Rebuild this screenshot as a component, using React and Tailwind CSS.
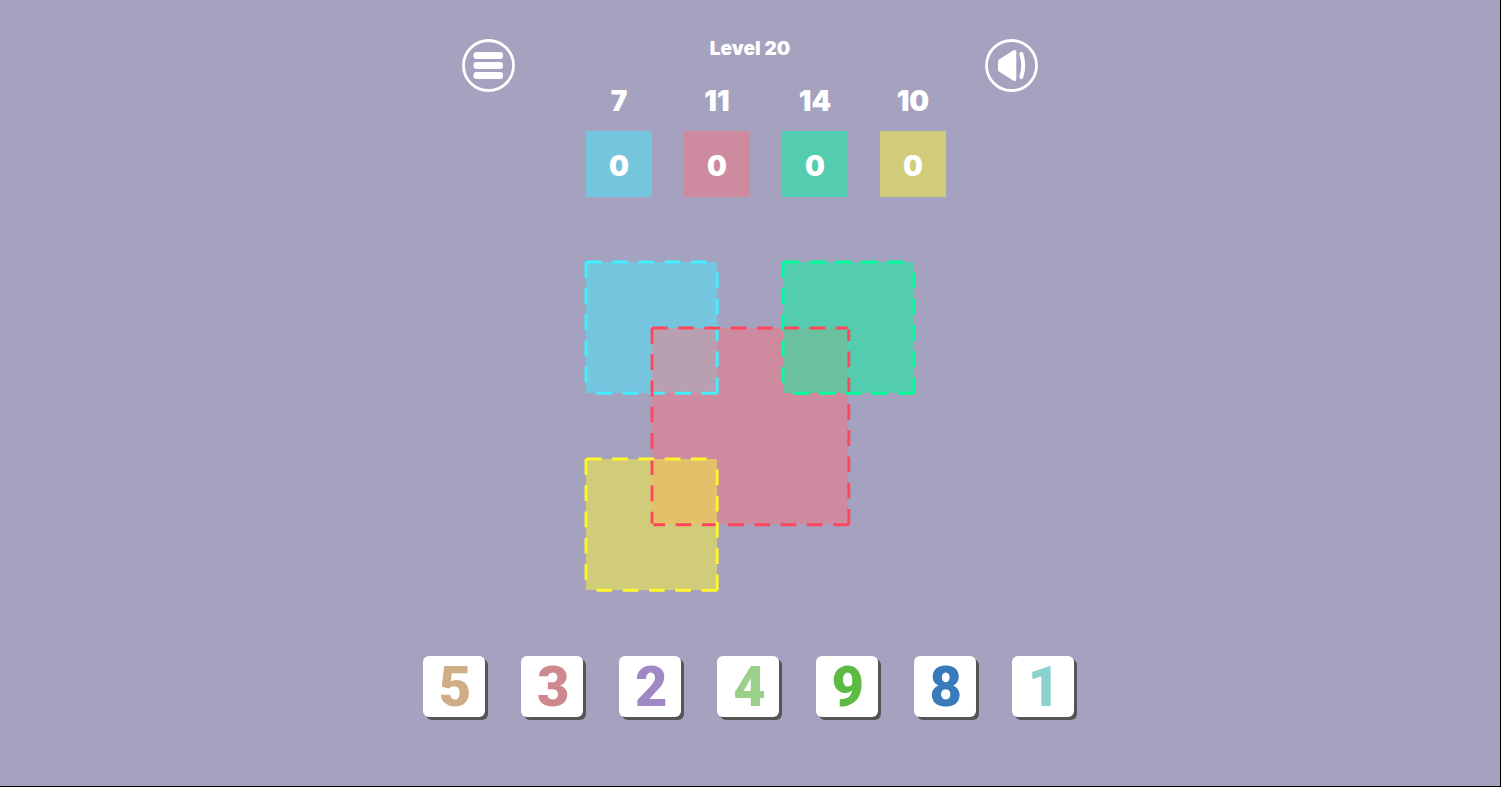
import React from "react";

const targets = [
  { goal: 7, value: 0, name: "Blue", fill: "bg-[#76c5de]" },
  { goal: 11, value: 0, name: "Red", fill: "bg-[#ce8b9f]" },
  { goal: 14, value: 0, name: "Green", fill: "bg-[#54ccb0]" },
  { goal: 10, value: 0, name: "Yellow", fill: "bg-[#d0cc7a]" },
];

const areas = [
  { id: "blue", size: 20, place: "col-start-1 col-span-2 row-start-1 row-span-2", fill: "bg-[#76c5de]" },
  { id: "green", size: 20, place: "col-start-4 col-span-2 row-start-1 row-span-2", fill: "bg-[#54ccb0]" },
  { id: "yellow", size: 20, place: "col-start-1 col-span-2 row-start-4 row-span-2", fill: "bg-[#d0cc7a]" },
  { id: "red", size: 30, place: "col-start-2 col-span-3 row-start-2 row-span-3", fill: "bg-[#ce8b9f]" },
];

const overlaps = [
  "col-start-2 row-start-2 bg-[#b9a0b1]",
  "col-start-4 row-start-2 bg-[#6ac09f]",
  "col-start-2 row-start-4 bg-[#e5c06b]",
];

const outlines = [
  { ...areas[0], stroke: "stroke-[#43efff]" },
  { ...areas[3], stroke: "stroke-[#ff465c]" },
  { ...areas[1], stroke: "stroke-[#00ff9d]" },
  { ...areas[2], stroke: "stroke-[#fff72b]" },
];

const tiles = [
  { n: 5, color: "text-[#cfae87]" },
  { n: 3, color: "text-[#d0888f]" },
  { n: 2, color: "text-[#9f88c3]" },
  { n: 4, color: "text-[#9ad08a]" },
  { n: 9, color: "text-[#5dba43]" },
  { n: 8, color: "text-[#387aba]" },
  { n: 1, color: "text-[#89d2ce]" },
];

function MenuIcon() {
  return (
    <svg viewBox="0 0 53 53" className="size-full" aria-hidden="true">
      <circle cx="26.5" cy="26.5" r="25" fill="none" stroke="white" strokeWidth="2.8" />
      <g fill="white">
        <rect x="11.5" y="13" width="29.5" height="7" rx="3" />
        <rect x="11.5" y="23" width="29.5" height="7" rx="3" />
        <rect x="11.5" y="33" width="29.5" height="7" rx="3" />
      </g>
    </svg>
  );
}

function SoundIcon() {
  return (
    <svg viewBox="0 0 53 53" className="size-full" aria-hidden="true">
      <circle cx="26.5" cy="26.5" r="25" fill="none" stroke="white" strokeWidth="2.8" />
      <path
        d="M14 20.5 28.5 11.3Q31.3 10 31.3 13V40Q31.3 43 28.5 41.7L14 32.5Q13 31.5 13 30V23Q13 21.5 14 20.5Z"
        fill="white"
      />
      <path d="M36.3 15Q40.2 26.5 36.3 38" fill="none" stroke="white" strokeWidth="4" strokeLinecap="round" />
    </svg>
  );
}

/* Ten drawing units make one board cell. */
function Outline({ size, stroke, place }) {
  return (
    <svg
      viewBox={`0 0 ${size} ${size}`}
      className={`size-full overflow-visible ${place} ${stroke}`}
      fill="none"
      strokeWidth="0.44"
      strokeDasharray="2.4 1.6"
      aria-hidden="true"
    >
      <path d={`M0 0H${size - 0.2}`} />
      <path d={`M0 0V${size - 0.2}`} />
      <path d={`M${size} ${size}H0.2`} />
      <path d={`M${size} ${size}V0.2`} />
    </svg>
  );
}

export default function App() {
  return (
    <div className="min-h-screen border-r border-b border-black bg-[#a5a2bf] pt-[39px] pb-10 font-['Inter',sans-serif] font-black text-white">
      <main className="mx-auto max-w-[656px]">
        <header className="flex items-start justify-between px-10">
          <button type="button" aria-label="Menu" className="size-[53px] shrink-0">
            <MenuIcon />
          </button>
          <div className="flex flex-col items-center">
            <h1 className="text-[19px] leading-5">Level 20</h1>
            <ul className="mt-7 flex gap-8 pl-8">
              {targets.map((t) => (
                <li key={t.name} className="flex w-[66px] flex-col items-center gap-4">
                  <span className="text-[28px] leading-7">{t.goal}</span>
                  <span className={`flex h-[66px] w-full items-center justify-center pt-1 text-[28px] leading-7 ${t.fill}`}>
                    {t.value}
                  </span>
                </li>
              ))}
            </ul>
          </div>
          <button type="button" aria-label="Sound" className="size-[53px] shrink-0">
            <SoundIcon />
          </button>
        </header>

        <section
          aria-label="Board"
          className="mx-auto mt-[65px] grid aspect-square w-1/2 grid-cols-5 grid-rows-5"
        >
          {areas.map((a) => (
            <div key={a.id} className={`${a.place} ${a.fill}`} />
          ))}
          {overlaps.map((o) => (
            <div key={o} className={o} />
          ))}
          {outlines.map((o) => (
            <Outline key={o.id} size={o.size} stroke={o.stroke} place={o.place} />
          ))}
        </section>

        <div className="mt-[66px] flex justify-between pr-1 pl-px font-['Roboto',sans-serif]">
          {tiles.map((t) => (
            <button
              key={t.n}
              type="button"
              className={`flex h-[61px] w-[62px] items-center justify-center rounded-md bg-white pl-0.5 text-[56px] leading-none shadow-[3px_3px_0_#555555] ${t.color}`}
            >
              {t.n}
            </button>
          ))}
        </div>
      </main>
    </div>
  );
}
